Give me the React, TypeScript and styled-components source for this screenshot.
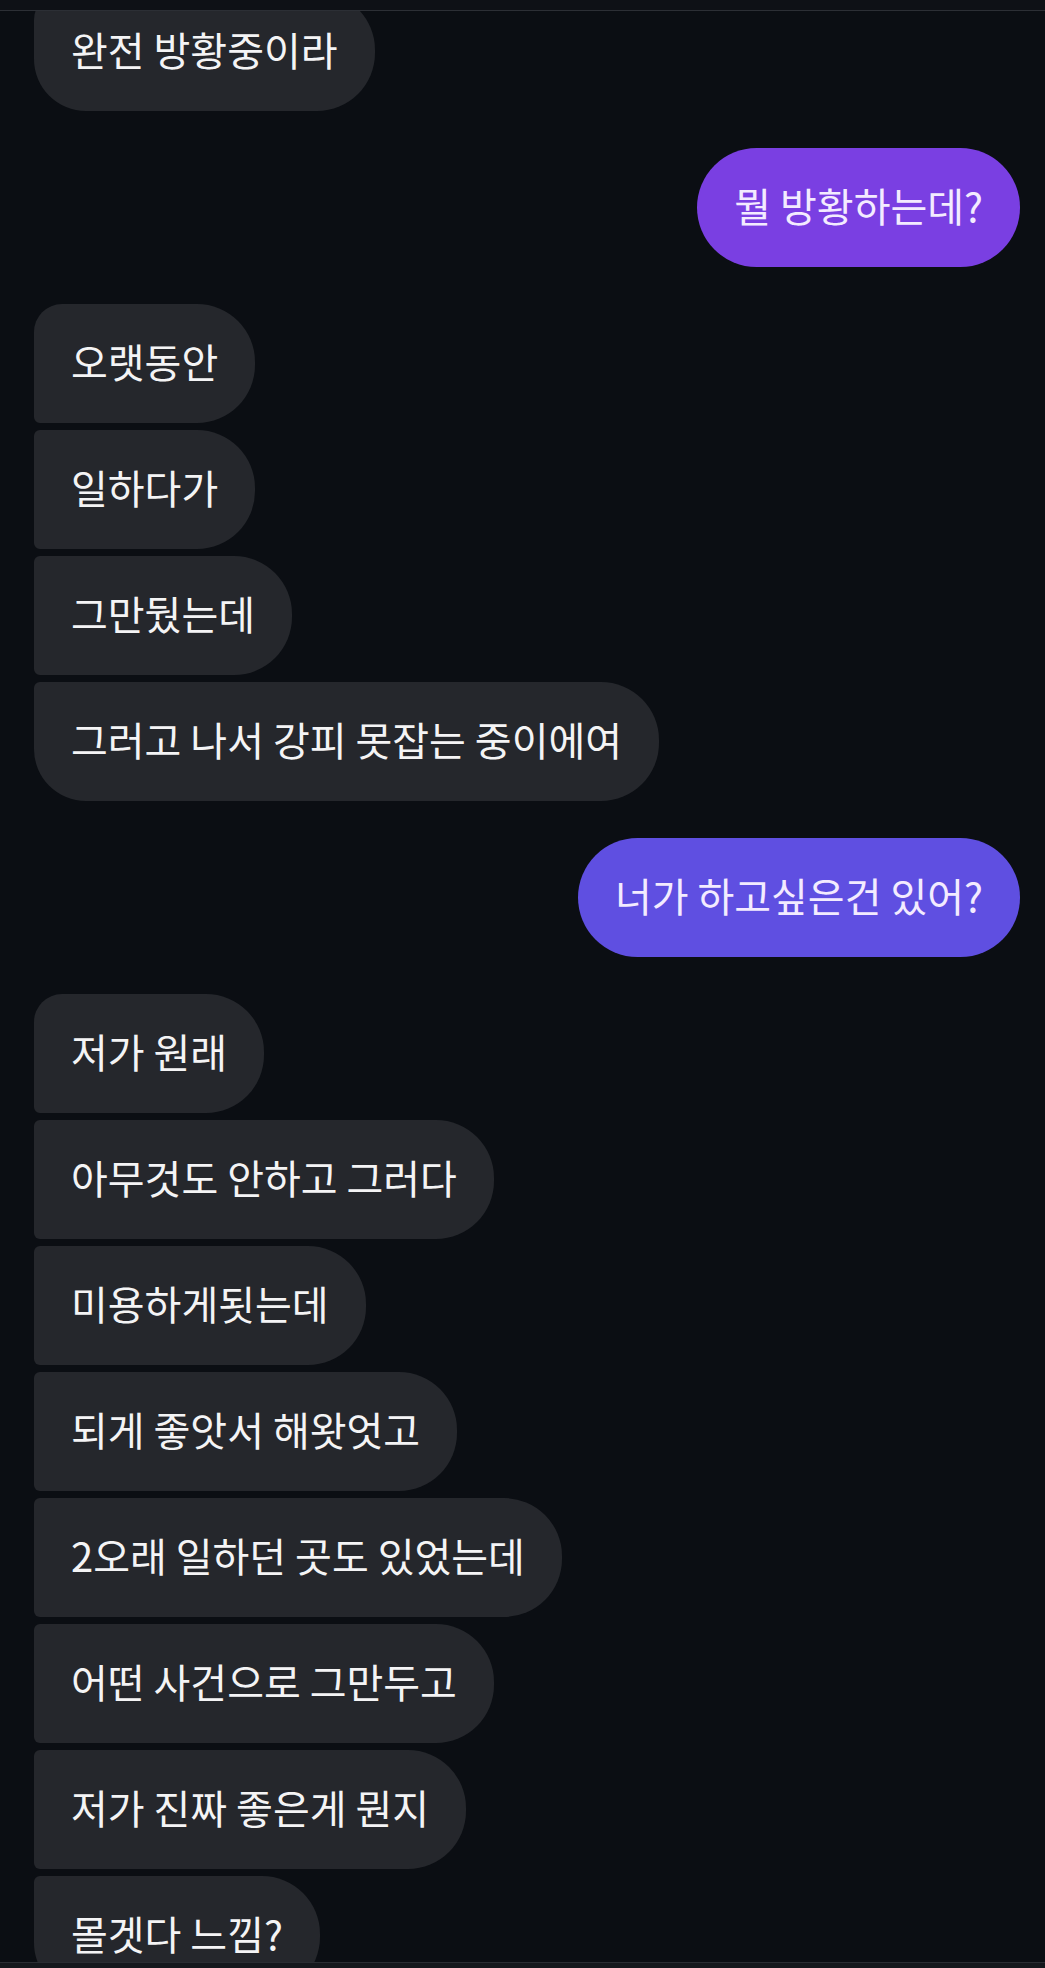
import React from "react";
import styled, { createGlobalStyle } from "styled-components";

type Side = "in" | "out";

type Group = {
  side: Side;
  tint?: string;
  messages: string[];
};

const groups: Group[] = [
  { side: "in", messages: ["완전 방황중이라"] },
  { side: "out", tint: "#7a3fe2", messages: ["뭘 방황하는데?"] },
  {
    side: "in",
    messages: ["오랫동안", "일하다가", "그만뒀는데", "그러고 나서 강피 못잡는 중이에여"],
  },
  { side: "out", tint: "#5f4fe1", messages: ["너가 하고싶은건 있어?"] },
  {
    side: "in",
    messages: [
      "저가 원래",
      "아무것도 안하고 그러다",
      "미용하게됫는데",
      "되게 좋앗서 해왓엇고",
      "2오래 일하던 곳도 있었는데",
      "어떤 사건으로 그만두고",
      "저가 진짜 좋은게 뭔지",
      "몰겟다 느낌?",
    ],
  },
];

const GlobalStyle = createGlobalStyle`
  * {
    box-sizing: border-box;
  }

  body {
    margin: 0;
    background: #0b0e13;
    font-family: "Noto Sans CJK KR", "Noto Sans", sans-serif;
  }
`;

const App = () => {
  return (
    <>
      <GlobalStyle />
      <Screen>
        <Header />
        <Messages>
          <Thread>
            {groups.map((group, gIdx) => (
              <GroupList key={gIdx} side={group.side}>
                {group.messages.map((text, idx) => (
                  <Bubble
                    key={text}
                    side={group.side}
                    tint={group.tint}
                    first={idx === 0}
                    last={idx === group.messages.length - 1}
                  >
                    {text}
                  </Bubble>
                ))}
              </GroupList>
            ))}
          </Thread>
        </Messages>
        <Footer />
      </Screen>
    </>
  );
};

const Screen = styled.div`
  display: flex;
  flex-direction: column;
  width: 1045px;
  height: 1968px;
  overflow: hidden;
  background: #0b0e13;
`;

const Header = styled.div`
  flex: 0 0 auto;
  height: 11px;
  background: #0e1116;
  border-bottom: 1px solid #2c2f35;
  position: relative;
  z-index: 1;
`;

const Messages = styled.div`
  flex: 1 1 auto;
  overflow: hidden;
`;

const Thread = styled.div`
  display: flex;
  flex-direction: column;
  gap: 37px;
  margin-top: -19px;
  padding: 0 25px 0 34px;
`;

const GroupList = styled.div<{ side: Side }>`
  display: flex;
  flex-direction: column;
  align-items: ${({ side }) => (side === "in" ? "flex-start" : "flex-end")};
  gap: 7px;
`;

const Bubble = styled.div<{
  side: Side;
  tint?: string;
  first: boolean;
  last: boolean;
}>`
  height: 119px;
  display: flex;
  align-items: center;
  padding: 0 37px 5px 37px;
  font-size: 40px;
  line-height: 54px;
  white-space: nowrap;
  color: ${({ side }) => (side === "in" ? "#f4f4f5" : "#f3ebff")};
  background: ${({ side, tint }) => (side === "in" ? "#25272c" : tint)};
  border-radius: ${({ side, first, last }) =>
    side === "out"
      ? "60px"
      : `${first ? 28 : 6}px 58px 58px ${last ? 52 : 6}px`};
`;

const Footer = styled.div`
  flex: 0 0 auto;
  height: 6px;
  background: #15181d;
  border-top: 1px solid #2a2d33;
`;

export default App;
